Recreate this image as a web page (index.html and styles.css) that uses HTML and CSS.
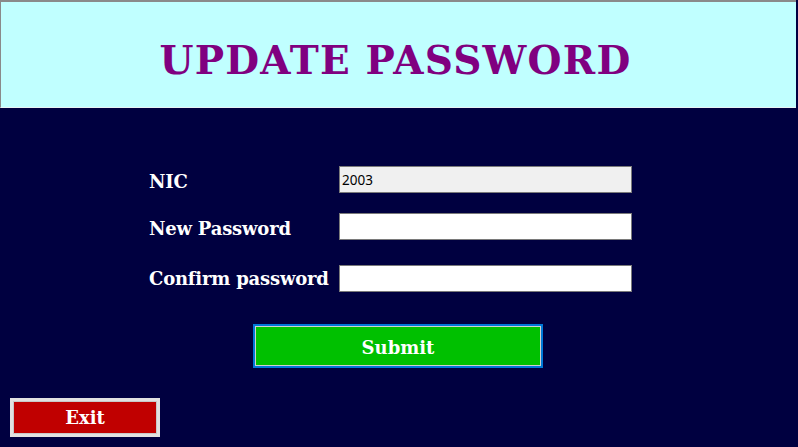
FILE: index.html
```html
<!DOCTYPE html>
<html>
<head>
<meta charset="utf-8">
<link rel="stylesheet" href="styles.css">
</head>
<body>
<div class="page">
  <header class="header">
    <h1 class="title">UPDATE PASSWORD</h1>
  </header>
  <main class="main">
    <form class="form">
      <div class="row row-nic">
        <label class="label">NIC</label>
        <input class="field field-ro" type="text" value="2003" readonly>
      </div>
      <div class="row row-new">
        <label class="label">New Password</label>
        <input class="field" type="password">
      </div>
      <div class="row row-confirm">
        <label class="label">Confirm password</label>
        <input class="field" type="password">
      </div>
      <div class="submit-wrap">
        <button type="button" class="btn btn-submit">Submit</button>
      </div>
    </form>
    <div class="exit-wrap">
      <button type="button" class="btn btn-exit">Exit</button>
    </div>
  </main>
</div>
</body>
</html>
```
FILE: styles.css
```css
html, body {
  margin: 0;
  padding: 0;
  background: #000040;
  width: 798px;
  height: 447px;
  overflow: hidden;
}
.page {
  display: flex;
  flex-direction: column;
  height: 447px;
}
.header {
  box-sizing: border-box;
  height: 108px;
  background: #c0ffff;
  border-top: 2px solid #8a8a8a;
  border-left: 1px solid #8a8a8a;
  border-bottom: 1px solid #e8f4f4;
  margin-right: 2px;
  display: flex;
  align-items: center;
  justify-content: center;
}
.title {
  margin: 0;
  padding-top: 10px;
  padding-right: 6px;
  font-family: "DejaVu Serif", serif;
  font-weight: bold;
  font-size: 39px;
  letter-spacing: 1.2px;
  color: #800080;
}
.main {
  flex: 1;
  display: flex;
  flex-direction: column;
}
.form {
  display: flex;
  flex-direction: column;
  padding-top: 58px;
}
.row {
  display: flex;
  align-items: center;
  padding-left: 149px;
}
.row-new { margin-top: 20px; }
.row-confirm { margin-top: 25px; }
.label {
  width: 190px;
  font-family: "DejaVu Serif", serif;
  font-weight: bold;
  font-size: 18px;
  color: #ffffff;
  letter-spacing: -0.2px;
}
.row-nic .label { padding-top: 4px; }
.row-new .label { padding-top: 3px; }
.row-confirm .label { padding-top: 0; }
.field {
  box-sizing: border-box;
  width: 293px;
  height: 27px;
  margin: 0;
  padding: 0 2px;
  border: 1px solid #7a7a7a;
  background: #ffffff;
  font-family: "Noto Sans", "Open Sans", sans-serif;
  font-size: 13.5px;
  color: #000;
  outline: none;
}
.field-ro { background: #f0f0f0; }
.submit-wrap {
  display: flex;
  justify-content: center;
  margin-top: 32px;
}
.btn {
  box-sizing: border-box;
  font-family: "DejaVu Serif", serif;
  font-weight: bold;
  font-size: 18px;
  color: #ffffff;
  margin: 0;
  padding: 0;
  cursor: pointer;
}
.btn-submit {
  width: 290px;
  height: 44px;
  background: #00c000;
  border: 2px solid #0078d7;
  box-shadow: inset 0 0 0 1px #d0d0d0;
  margin-right: 2px;
  padding-top: 2px;
}
.exit-wrap {
  display: flex;
  padding-left: 10px;
  margin-top: 30px;
}
.btn-exit {
  width: 150px;
  height: 39px;
  background: #c00000;
  border: 3px solid #e1e1e1;
  box-shadow: inset 0 0 0 1px #c8c8c8;
}
```
